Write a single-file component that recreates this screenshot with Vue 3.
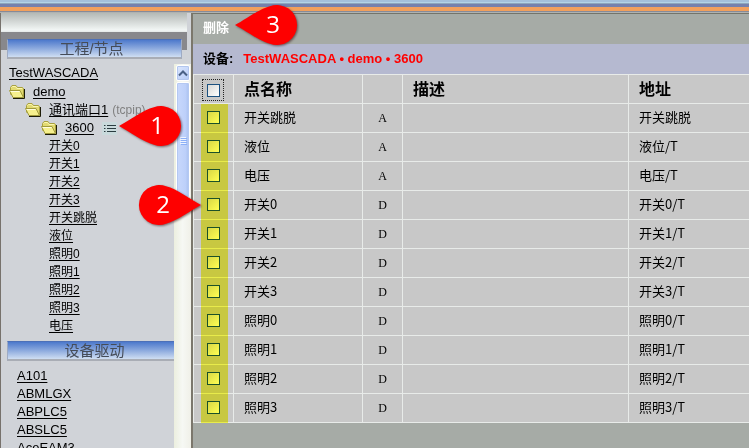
<script setup>
import { reactive, computed } from 'vue'

const tags = ['开关0', '开关1', '开关2', '开关3', '开关跳脱', '液位', '照明0', '照明1', '照明2', '照明3', '电压']
const drivers = ['A101', 'ABMLGX', 'ABPLC5', 'ABSLC5', 'AceEAM3']

const points = reactive([
  { name: '开关跳脱', type: 'A', address: '开关跳脱' },
  { name: '液位', type: 'A', address: '液位/T' },
  { name: '电压', type: 'A', address: '电压/T' },
  { name: '开关0', type: 'D', address: '开关0/T' },
  { name: '开关1', type: 'D', address: '开关1/T' },
  { name: '开关2', type: 'D', address: '开关2/T' },
  { name: '开关3', type: 'D', address: '开关3/T' },
  { name: '照明0', type: 'D', address: '照明0/T' },
  { name: '照明1', type: 'D', address: '照明1/T' },
  { name: '照明2', type: 'D', address: '照明2/T' },
  { name: '照明3', type: 'D', address: '照明3/T' }
].map((p) => ({ ...p, checked: false })))

const all = computed({
  get: () => points.every((p) => p.checked),
  set: (value) => points.forEach((p) => { p.checked = value })
})

const nodes = [
  { label: 'demo', level: 'l0' },
  { label: '通讯端口1', level: 'l1', note: '(tcpip)' },
  { label: '3600', level: 'l2', list: true }
]
</script>

<template>
  <div class="page">
    <div class="topbar"></div>
    <div class="frames">
      <aside class="sidebar">
        <div class="fade"></div>
        <div class="band"><h2 class="bar">工程/节点</h2></div>
        <div class="panel">
          <nav class="tree">
            <div class="row root"><a href="#">TestWASCADA</a></div>
            <div v-for="n in nodes" :key="n.label" class="row" :class="n.level">
              <svg class="folder" viewBox="0 0 16 14" aria-hidden="true">
                <path d="M1.500 9.500V2.500L3 .5h4L8.500 2.500h5l1 1v9" fill="#e2da70" stroke="#a8a040" />
                <path d="M2.500 2.500l1-1h3l1.500 2h5" fill="none" stroke="#fbf7b0" />
                <path d="M.5 5.500h10.500l3.500 7H4z" fill="#f6f08e" stroke="#a09a3c" />
                <path d="M1.500 6.500h9" stroke="#fffde0" />
                <path d="M4 13.500h11.500V4" fill="none" stroke="#1d1c08" />
              </svg>
              <a href="#">{{ n.label }}</a>
              <span v-if="n.note" class="note">{{ n.note }}</span>
              <svg v-if="n.list" class="list" viewBox="0 0 15 13" aria-hidden="true">
                <rect width="15" height="13" fill="#c9dadc" />
                <path d="M2 3.500h1.500M2 6.500h1.500M2 9.500h1.500M5 3.500h9M5 6.500h9M5 9.500h9" stroke="#2a3c40" />
              </svg>
            </div>
            <div v-for="t in tags" :key="t" class="row tag"><a href="#">{{ t }}</a></div>
            <h2 class="bar second">设备驱动</h2>
            <div v-for="d in drivers" :key="d" class="row driver"><a href="#">{{ d }}</a></div>
          </nav>
          <div class="scroll">
            <button class="up" type="button" aria-label="▲">
              <svg viewBox="0 0 10 7" aria-hidden="true"><path d="M1 5.500l4-4 4 4" fill="none" stroke="#4a6185" stroke-width="2" /></svg>
            </button>
            <div class="thumb"><i></i><i></i><i></i><i></i></div>
          </div>
        </div>
      </aside>

      <main class="main">
        <div class="toolbar"><button class="delete" type="button">删除</button></div>
        <div class="device"><span>设备:</span><strong>TestWASCADA • demo • 3600</strong></div>
        <div class="points">
          <table>
            <colgroup>
              <col class="c-check"><col class="c-name"><col class="c-type"><col class="c-desc"><col>
            </colgroup>
            <thead>
              <tr>
                <th class="check"><label class="focus"><input v-model="all" type="checkbox" aria-label="点名称"></label></th>
                <th>点名称</th>
                <th></th>
                <th>描述</th>
                <th>地址</th>
              </tr>
            </thead>
            <tbody>
              <tr v-for="p in points" :key="p.name">
                <td class="check"><input v-model="p.checked" type="checkbox" :aria-label="p.name"></td>
                <td>{{ p.name }}</td>
                <td class="type">{{ p.type }}</td>
                <td></td>
                <td>{{ p.address }}</td>
              </tr>
            </tbody>
          </table>
          <div class="highlight"></div>
        </div>
      </main>
    </div>

    <svg class="pin pin-1" viewBox="0 0 62 40" aria-hidden="true">
      <path d="M0 20C10 15 24 4 35 1.300A20 20 0 1 1 35 38.700C24 36 10 25 0 20z" />
      <text x="38" y="28">1</text>
    </svg>
    <svg class="pin pin-2" viewBox="0 0 62 40" aria-hidden="true">
      <path d="M62 20C52 15 38 4 27 1.300A20 20 0 1 0 27 38.700C38 36 52 25 62 20z" />
      <text x="24" y="28">2</text>
    </svg>
    <svg class="pin pin-3" viewBox="0 0 62 40" aria-hidden="true">
      <path d="M0 20C10 15 24 4 35 1.300A20 20 0 1 1 35 38.700C24 36 10 25 0 20z" />
      <text x="38" y="28">3</text>
    </svg>
  </div>
</template>

<style>
body {
  margin: 0;
  overflow: hidden;
}
</style>

<style scoped>
* {
  box-sizing: border-box;
}
.page {
  position: relative;
  display: flex;
  flex-direction: column;
  height: 100vh;
  overflow: hidden;
  background: #d0d3d8;
  color: #000;
  font-family: "Liberation Sans", "Noto Sans CJK SC", sans-serif;
  font-size: 13px;
  line-height: 18px;
}
.topbar {
  flex: none;
  height: 13px;
  background: linear-gradient(#a4c0da 0 2px, #b4d4e6 2px 3px, #8ea6bc 3px 4px, #7681ac 4px 7px, #f2a05c 7px 11px, #868a98 11px 12px, #b0b2b0 12px 13px);
}
.frames {
  display: flex;
  flex: 1;
  min-height: 0;
}
.sidebar {
  display: flex;
  flex: 0 0 191px;
  flex-direction: column;
  min-height: 0;
  border-left: 1px solid #77726c;
}
.fade {
  flex: none;
  height: 19px;
  margin-right: 4px;
  background: linear-gradient(#b4b9b6, #f2f6f5 90%, #e4e8e8);
}
.band {
  flex: none;
  margin-right: 4px;
  padding: 7px 5px 0 6px;
  background: linear-gradient(#88888c 0 18px, transparent 18px);
}
.bar {
  height: 20px;
  margin: 0;
  padding-right: 6px;
  border: 1px solid #9eabc4;
  border-top-color: #4c70b8;
  border-bottom: 2px solid #a9adb5;
  background: linear-gradient(#4d79cc, #86a5dc 45%, #cfdef2);
  color: #454c58;
  font-size: 15px;
  font-weight: 400;
  line-height: 18px;
  text-align: center;
}
.panel {
  display: flex;
  flex: 1;
  min-height: 0;
  padding-top: 5px;
}
.tree {
  flex: 1;
  min-width: 0;
  overflow: hidden;
}
.row {
  display: flex;
  align-items: center;
  height: 18px;
  white-space: nowrap;
}
.row a {
  color: #000;
  text-decoration: underline;
  text-underline-offset: 2px;
}
.root {
  padding-left: 8px;
}
.l0 { padding-left: 8px; }
.l1 { padding-left: 24px; }
.l2 { padding-left: 40px; }
.root + .l0 {
  margin-top: 1px;
}
.folder {
  flex: none;
  width: 16px;
  height: 14px;
  margin-right: 8px;
}
.note {
  margin-left: 4px;
  color: #808080;
  font-size: 12px;
}
.list {
  width: 15px;
  height: 13px;
  margin-left: 8px;
}
.tag {
  padding-left: 48px;
  font-size: 12px;
}
.second {
  margin: 6px -8px 6px 6px;
  padding-right: 0;
}
.driver {
  padding-left: 16px;
}
.scroll {
  display: flex;
  flex: 0 0 17px;
  flex-direction: column;
  gap: 1px;
  padding: 1px 1px 0 2px;
  background: linear-gradient(90deg, #ecefdf, #f6f8f4 50%, #f0f0e8);
}
.up {
  display: flex;
  flex: none;
  align-items: center;
  justify-content: center;
  height: 16px;
  padding: 0;
  border: 1px solid #fff;
  border-radius: 2px;
  background: linear-gradient(135deg, #dde8ff, #b4caf6);
  box-shadow: inset 0 0 0 1px #b2c6ee;
}
.up svg {
  width: 10px;
  height: 7px;
}
.thumb {
  display: flex;
  flex: none;
  flex-direction: column;
  align-items: center;
  justify-content: center;
  gap: 1px;
  height: 116px;
  border: 1px solid #fff;
  border-radius: 2px;
  background: linear-gradient(90deg, #c8d8fc, #bdd0fa 70%, #a8c0ee);
  box-shadow: inset 0 0 0 1px #b4c8f2;
}
.thumb i {
  width: 6px;
  height: 1px;
  background: #eef4ff;
  box-shadow: 1px 1px 0 #8cb0f8;
}
.main {
  flex: 1;
  min-width: 0;
  overflow: hidden;
  border-top: 1px solid #74746a;
  border-left: 2px solid #7b776c;
  background: #a6aba6;
}
.toolbar {
  display: flex;
  align-items: center;
  height: 30px;
  padding: 0 10px 4px;
}
.delete {
  padding: 0;
  border: 0;
  background: none;
  color: #fff;
  font: bold 13px/18px "Noto Sans CJK SC", sans-serif;
}
.device {
  display: flex;
  align-items: center;
  gap: 10px;
  height: 30px;
  padding: 0 10px;
  background: #b5b9d0;
  font-weight: 700;
  white-space: nowrap;
}
.device strong {
  color: #f00;
}
.points {
  position: relative;
}
table {
  width: calc(100% + 1px);
  border-spacing: 1px;
  background: #e8ebe9;
  table-layout: fixed;
}
.c-check, .c-type { width: 39px; }
.c-name { width: 128px; }
.c-desc { width: 225px; }
th, td {
  height: 28px;
  padding: 0 10px 2px;
  background: #c8c8c8;
  font-family: "Noto Sans CJK SC", sans-serif;
  font-size: 13px;
  line-height: 18px;
  text-align: left;
  white-space: nowrap;
}
th {
  font-size: 16px;
}
.type {
  padding: 0;
  font-family: "Liberation Serif", serif;
  font-size: 12px;
  text-align: center;
}
td.check {
  padding: 0 0 2px 13px;
}
th.check {
  padding: 2px 0 0 8px;
}
.focus {
  display: flex;
  align-items: center;
  justify-content: center;
  width: 22px;
  height: 22px;
  border: 1px dotted #222;
}
input {
  display: block;
  width: 13px;
  height: 13px;
  margin: 0;
  border: 1px solid #1c5180;
  appearance: none;
  background: linear-gradient(135deg, #d8d8d6, #fff);
}
input:checked {
  background: #21a121;
}
.highlight {
  position: absolute;
  top: 30px;
  bottom: 0;
  left: 8px;
  width: 27px;
  background: #ffff52;
  mix-blend-mode: multiply;
  pointer-events: none;
}
.pin {
  position: absolute;
  width: 62px;
  height: 40px;
  overflow: visible;
  filter: drop-shadow(1px 1px 1px rgba(60, 20, 20, 0.6));
  pointer-events: none;
}
.pin path {
  fill: #fe0000;
}
.pin text {
  fill: #fff;
  font-family: "Open Sans", sans-serif;
  font-size: 24px;
  text-anchor: middle;
}
.pin-1 { top: 106px; left: 119px; }
.pin-2 { top: 185px; left: 139px; }
.pin-3 { top: 5px; left: 235px; }
</style>
